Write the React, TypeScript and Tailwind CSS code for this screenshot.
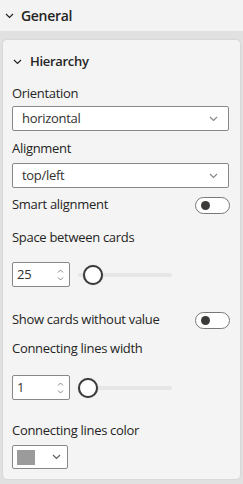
import React from "react";

const font = { fontFamily: '"Open Sans", "Noto Sans", sans-serif' };

function Chevron({ className = "" }: { className?: string }) {
  return (
    <svg width="9" height="6" viewBox="0 0 9 6" className={className}>
      <path d="M1 1 L4.5 4.5 L8 1" fill="none" stroke="currentColor" strokeWidth="1.2" />
    </svg>
  );
}

function Select({ value }: { value: string }) {
  return (
    <div className="flex items-center justify-between h-[25px] w-[217px] bg-white border border-[#8a8886] rounded-[2px] pl-[9px] pr-[10px]">
      <span className="text-[13px] text-[#323130]">{value}</span>
      <Chevron className="text-[#8a8886]" />
    </div>
  );
}

function Toggle() {
  return (
    <div className="flex items-center w-[35px] h-[17px] rounded-full border border-[#7a7876] bg-white pl-[5px]">
      <div className="w-[9px] h-[9px] rounded-full bg-[#3b3a39]" />
    </div>
  );
}

function NumberSlider({ value, thumbLeft }: { value: string; thumbLeft: number }) {
  return (
    <div className="flex items-center h-[25px]">
      <div className="flex items-center justify-between w-[58px] h-[25px] bg-white border border-[#8a8886] rounded-[2px] pl-[4px] pr-[5px]">
        <span className="text-[13px] text-[#323130]">{value}</span>
        <div className="flex flex-col items-center gap-[4px] text-[#8a8886]">
          <svg width="7" height="4" viewBox="0 0 7 4">
            <path d="M1 3.5 L3.5 1 L6 3.5" fill="none" stroke="currentColor" strokeWidth="1" />
          </svg>
          <svg width="7" height="4" viewBox="0 0 7 4">
            <path d="M1 0.5 L3.5 3 L6 0.5" fill="none" stroke="currentColor" strokeWidth="1" />
          </svg>
        </div>
      </div>
      <div className="relative ml-[8px] w-[94px] h-[20px] flex items-center">
        <div className="w-full h-[4px] rounded-full bg-[#e6e6e6]" />
        <div
          className="absolute top-0 w-[20px] h-[20px] rounded-full bg-white border-[2.5px] border-[#3b3a39] shadow-[0_0_1px_rgba(0,0,0,0.4)]"
          style={{ left: thumbLeft }}
        />
      </div>
    </div>
  );
}

function Label({ children, className = "" }: { children: React.ReactNode; className?: string }) {
  return <div className={`h-[20px] flex items-center text-[13px] text-[#252423] ${className}`}>{children}</div>;
}

export default function App() {
  return (
    <div className="w-[243px] h-[484px] bg-[#e1e1e1] overflow-hidden tracking-[-0.3px]" style={font}>
      <div className="h-[31px] bg-[#f3f3f3] flex items-center pl-[5px] text-[#252423]">
        <Chevron />
        <span className="ml-[7px] text-[14px] font-semibold">General</span>
      </div>
      <div className="mx-[3px] mt-[9px] h-[439px] rounded-[4px] bg-[#f4f4f4] shadow-[0_0_2px_rgba(0,0,0,0.15)] pl-[9px] pr-[10px]">
        <div className="h-[44px] flex items-center pl-[1px] text-[#252423]">
          <Chevron />
          <span className="ml-[8px] text-[13px] font-semibold">Hierarchy</span>
        </div>
        <Label>Orientation</Label>
        <div className="mt-[2px]">
          <Select value="horizontal" />
        </div>
        <Label className="mt-[8px]">Alignment</Label>
        <div className="mt-[4px]">
          <Select value="top/left" />
        </div>
        <div className="h-[34px] flex items-center justify-between">
          <span className="text-[13px] text-[#252423]">Smart alignment</span>
          <Toggle />
        </div>
        <Label className="mt-[6px]">Space between cards</Label>
        <div className="mt-[14px]">
          <NumberSlider value="25" thumbLeft={5} />
        </div>
        <div className="mt-[16px] h-[34px] flex items-center justify-between">
          <span className="text-[13px] text-[#252423]">Show cards without value</span>
          <Toggle />
        </div>
        <Label className="mt-[2px]">Connecting lines width</Label>
        <div className="mt-[16px]">
          <NumberSlider value="1" thumbLeft={0} />
        </div>
        <Label className="mt-[21px]">Connecting lines color</Label>
        <div className="mt-[4px] flex items-center justify-between w-[56px] h-[24px] bg-white border border-[#8a8886] rounded-[2px] pl-[4px] pr-[6px]">
          <div className="w-[18px] h-[15px] bg-[#9b9b9b]" />
          <Chevron className="text-[#605e5c]" />
        </div>
      </div>
    </div>
  );
}
